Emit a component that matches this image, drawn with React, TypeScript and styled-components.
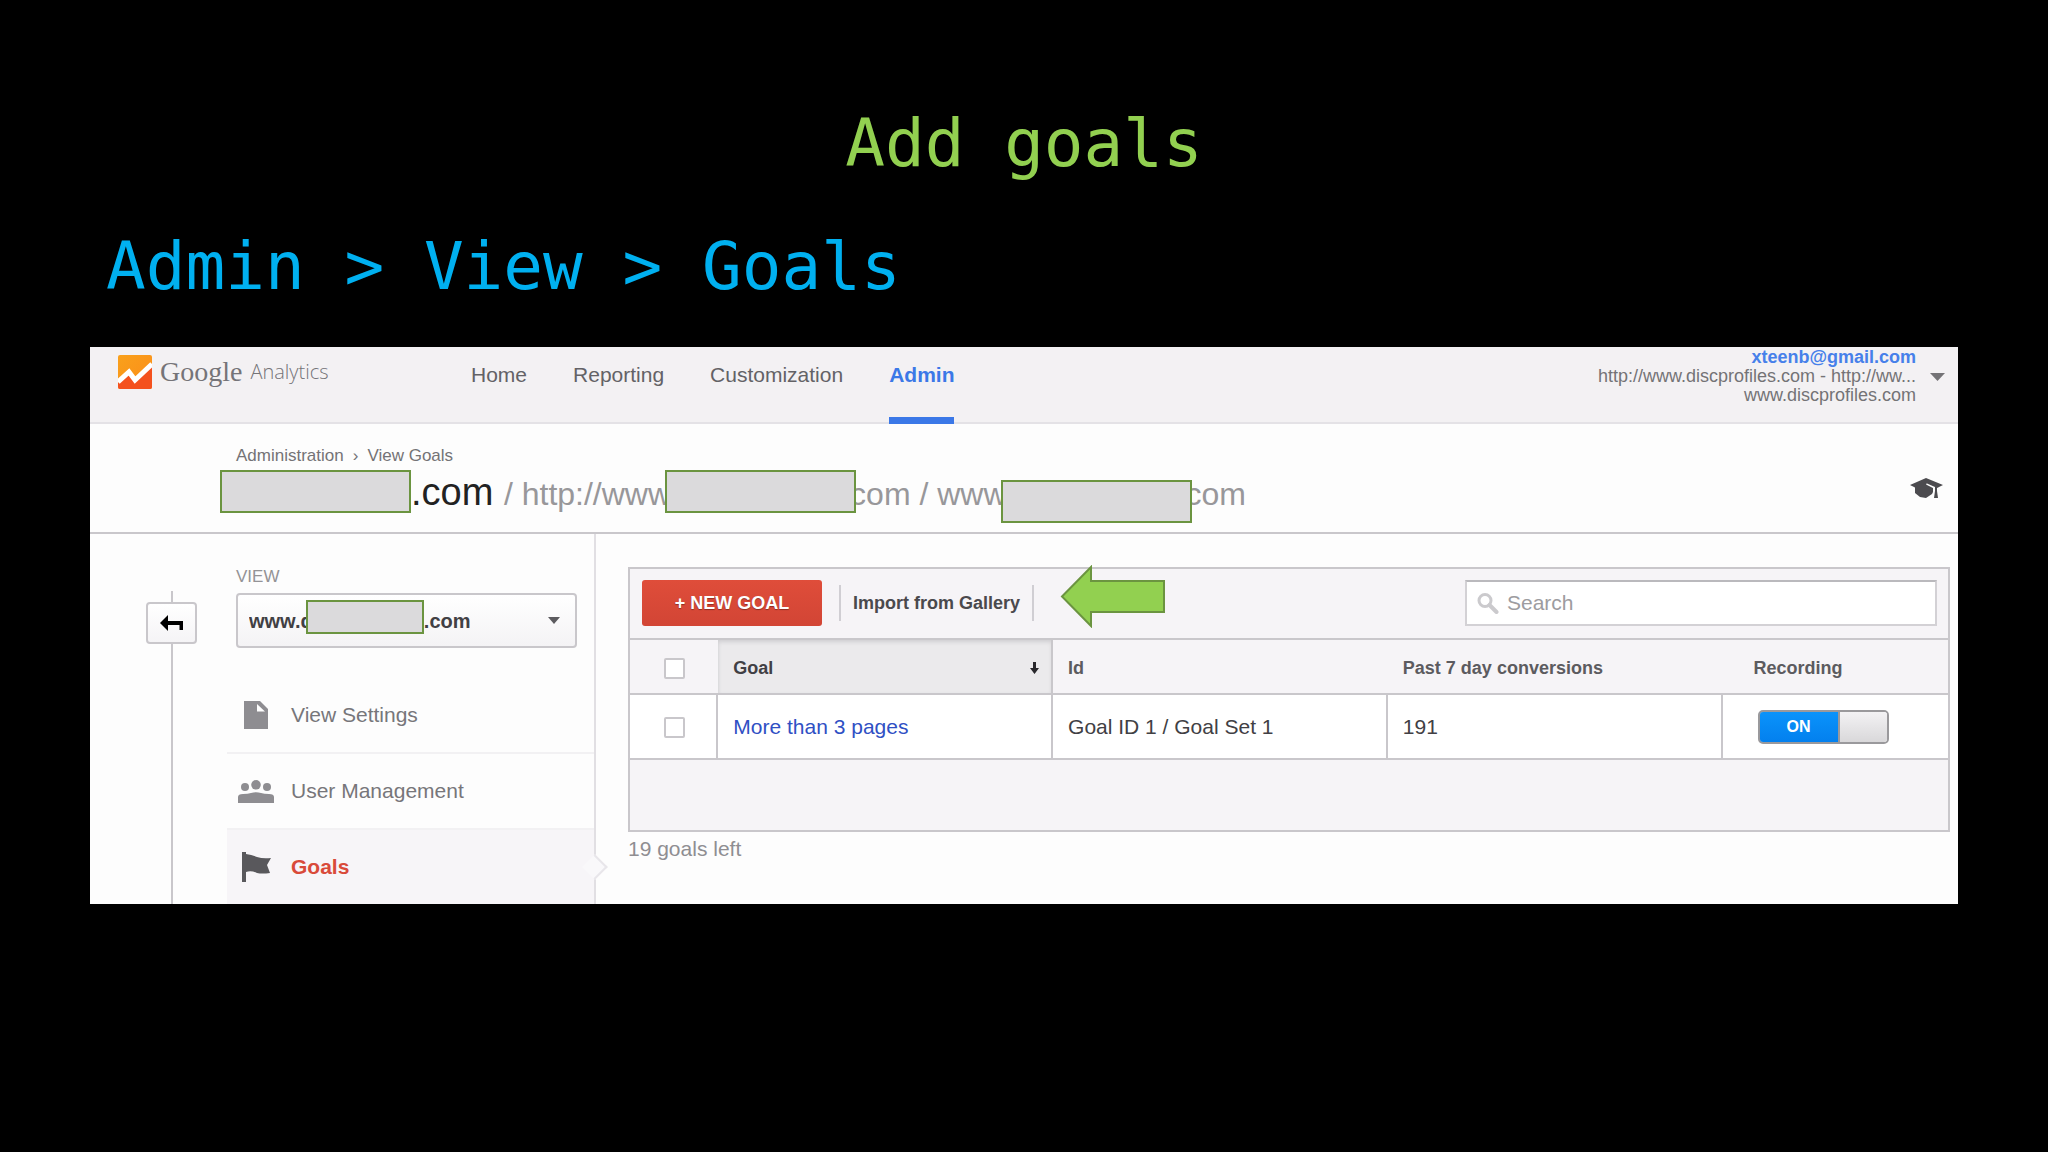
import React from "react";
import styled, { createGlobalStyle, css } from "styled-components";

const line = "#c9c7cb";
const green = "#6b9440";

const GlobalStyle = createGlobalStyle`
  *, *::before, *::after { box-sizing: border-box; }
  html, body { margin: 0; min-height: 100%; background: #000; }
  body { font-family: "Liberation Sans", Arial, sans-serif; font-size: 21px; line-height: 24px; color: #333; }
  button, input, select { font-family: inherit; }
`;

const Slide = styled.main`
  padding: 104px 90px 0;
`;

const SlideTitle = styled.h1`
  margin: 0;
  text-align: center;
  font: 400 66px/80px "DejaVu Sans Mono", monospace;
  color: #92d050;
`;

const SlideSubtitle = styled.p`
  margin: 43px 16px 40px;
  font: 400 66px/80px "DejaVu Sans Mono", monospace;
  color: #00b0f0;
`;

const Panel = styled.section`
  background: #fdfdfd;
`;

const TopBar = styled.header`
  display: flex;
  align-items: flex-start;
  padding: 0 13px 0 28px;
  background: #f3f1f3;
  box-shadow: inset 0 -2px 0 #e4e2e6;
`;

const Logo = styled.a`
  display: flex;
  align-items: center;
  gap: 8px;
  width: 353px;
  padding-top: 8px;
  text-decoration: none;
`;

const LogoGoogle = styled.span`
  font: 400 28px/34px "Liberation Serif", serif;
  color: #757478;
`;

const LogoProduct = styled.span`
  font: 300 20px/34px "Open Sans", sans-serif;
  color: #757478;
`;

const Nav = styled.nav`
  display: flex;
  gap: 46px;
`;

const NavLink = styled.a<{ $active?: boolean }>`
  padding: 16px 0 30px;
  border-bottom: 7px solid transparent;
  color: #636266;
  text-decoration: none;
  ${(p) =>
    p.$active &&
    css`
      color: #3b78e7;
      font-weight: 700;
      border-color: #3b78e7;
    `}
`;

const Account = styled.button`
  display: flex;
  align-items: center;
  gap: 14px;
  margin-left: auto;
  padding: 1px 0 0;
  border: 0;
  background: none;
  text-align: right;
  font-size: 18px;
  line-height: 19px;
  color: #747376;
`;

const AccountText = styled.span`
  display: flex;
  flex-direction: column;
`;

const Email = styled.strong`
  color: #4680ea;
`;

const TitleBar = styled.div`
  display: flex;
  justify-content: space-between;
  padding: 22px 15px 9px 146px;
  border-bottom: 2px solid ${line};
`;

const Crumbs = styled.nav`
  display: flex;
  gap: 9px;
  font-size: 17px;
  line-height: 20px;
  color: #747376;
`;

const CrumbLink = styled.a`
  color: inherit;
  text-decoration: none;
`;

const PageTitle = styled.h2`
  margin: 0;
  font-size: 38px;
  font-weight: 400;
  line-height: 52px;
  white-space: nowrap;
  color: #222;
`;

const Muted = styled.span`
  font-size: 32px;
  color: #98979a;
`;

const Redaction = styled.span<{ $lead?: boolean; $drop?: boolean }>`
  position: relative;
  display: inline-block;
  width: 191px;
  height: 43px;
  margin: ${(p) => (p.$lead ? "0 0 0 -16px" : "0 -6px")};
  vertical-align: ${(p) => (p.$drop ? "-18px" : "-8px")};
  border: 2px solid ${green};
  background: #dbdadc;
`;

const HelpButton = styled.button`
  align-self: flex-start;
  margin-top: 32px;
  padding: 0;
  border: 0;
  background: none;
  line-height: 0;
`;

const Body = styled.div`
  display: grid;
  grid-template-columns: 137px 369px minmax(0, 1fr);
`;

const Rail = styled.div`
  display: flex;
  flex-direction: column;
  align-items: center;
  padding: 57px 30px 0 56px;
`;

const RailLine = styled.span<{ $grow?: boolean }>`
  width: 2px;
  flex: ${(p) => (p.$grow ? "1" : "0 0 11px")};
  background: ${line};
`;

const BackButton = styled.button`
  display: grid;
  place-items: center;
  width: 51px;
  height: 42px;
  padding: 0;
  border: 2px solid ${line};
  border-radius: 4px;
  background: linear-gradient(#fff, #f5f4f6);
`;

const Sidebar = styled.aside`
  padding-top: 33px;
  border-right: 2px solid #e1dfe3;
`;

const ViewPicker = styled.div`
  position: relative;
  display: flex;
  flex-direction: column;
  gap: 6px;
  margin: 0 17px 30px 9px;
`;

const ViewLabel = styled.label`
  font-size: 17px;
  line-height: 20px;
  color: #949396;
`;

const ViewSelect = styled.select`
  appearance: none;
  height: 55px;
  padding: 0 11px;
  border: 2px solid ${line};
  border-radius: 4px;
  background: linear-gradient(#fff, #f4f3f5);
  font-size: 20px;
  font-weight: 700;
  color: #414044;
`;

const ViewCaret = styled.span`
  position: absolute;
  right: 17px;
  bottom: 24px;
  line-height: 0;
  pointer-events: none;
`;

const ViewRedaction = styled.span`
  position: absolute;
  left: 70px;
  bottom: 14px;
  width: 118px;
  height: 34px;
  border: 2px solid ${green};
  background: #dbdadc;
`;

const Menu = styled.ul`
  margin: 0;
  padding: 0;
  list-style: none;
`;

const MenuItem = styled.li<{ $active?: boolean }>`
  position: relative;
  &:not(:first-child) {
    border-top: 2px solid #f2f1f3;
  }
  ${(p) =>
    p.$active &&
    css`
      background: #f7f5f8;
      &::after {
        content: "";
        position: absolute;
        top: calc(50% - 9px);
        right: -10px;
        width: 18px;
        height: 18px;
        border: solid #e8e6ea;
        border-width: 2px 2px 0 0;
        background: #f9f8fa;
        transform: rotate(45deg);
      }
    `}
`;

const MenuLink = styled.a<{ $active?: boolean }>`
  display: flex;
  align-items: center;
  gap: 17px;
  height: 74px;
  padding-left: 11px;
  text-decoration: none;
  font-weight: ${(p) => (p.$active ? 700 : 400)};
  color: ${(p) => (p.$active ? "#d94a3a" : "#77767a")};
`;

const MenuIcon = styled.span`
  display: grid;
  place-items: center;
  width: 36px;
`;

const Main = styled.div`
  padding: 33px 8px 0 32px;
`;

const Card = styled.div`
  border: 2px solid ${line};
  background: #f6f4f7;
`;

const Toolbar = styled.div`
  display: flex;
  align-items: center;
  gap: 17px;
  padding: 11px 11px 12px 12px;
`;

const NewGoalButton = styled.button`
  width: 180px;
  height: 46px;
  padding: 0;
  border: 0;
  border-radius: 3px;
  background: linear-gradient(#df4d3a, #d24535);
  font-size: 18px;
  font-weight: 700;
  color: #fff;
  text-shadow: 0 1px 1px rgba(0, 0, 0, 0.35);
`;

const ImportGroup = styled.div`
  position: relative;
  display: flex;
  padding: 0 12px;
  border: solid #d0ced3;
  border-width: 0 2px;
`;

const ImportButton = styled.button`
  height: 36px;
  padding: 0;
  border: 0;
  background: none;
  font-size: 18px;
  font-weight: 700;
  color: #4a494d;
`;

const Pointer = styled.svg`
  position: absolute;
  left: calc(100% + 28px);
  top: -20px;
`;

const SearchBox = styled.label`
  display: flex;
  align-items: center;
  gap: 8px;
  flex: 0 1 472px;
  height: 46px;
  margin-left: auto;
  padding: 0 10px;
  border: 2px solid #d3d1d5;
  border-top-color: #bab9bd;
  background: #fff;
`;

const SearchInput = styled.input`
  flex: 1;
  min-width: 0;
  padding: 0;
  border: 0;
  outline: 0;
  background: none;
  font-size: 21px;
  &::placeholder {
    color: #9d9c9f;
    opacity: 1;
  }
`;

const Table = styled.table`
  width: 100%;
  table-layout: fixed;
  border-collapse: separate;
  border-spacing: 0;
  border-top: 2px solid ${line};
`;

const Col = styled.col<{ $w: number }>`
  width: ${(p) => p.$w}%;
`;

const Th = styled.th<{ $sorted?: boolean; $indent?: number }>`
  height: 55px;
  padding: 2px 12px 0 ${(p) => p.$indent ?? 15}px;
  border-bottom: 2px solid ${line};
  text-align: left;
  font-size: 18px;
  color: #5c5b5f;
  ${(p) =>
    p.$sorted &&
    css`
      border-right: 2px solid ${line};
      background: #ebeaec;
      box-shadow: inset 0 3px 4px -1px #cfced1, inset 2px 0 3px -1px #dcdbde;
      color: #414044;
    `}
`;

const SortRow = styled.span`
  display: flex;
  align-items: center;
  justify-content: space-between;
`;

const Td = styled.td<{ $indent?: number }>`
  height: 65px;
  padding: 0 12px 0 ${(p) => p.$indent ?? 15}px;
  border-bottom: 2px solid ${line};
  background: #fff;
  color: #414044;
  &:not(:last-child) {
    border-right: 2px solid ${line};
  }
`;

const Check = styled.input`
  appearance: none;
  display: block;
  width: 21px;
  height: 21px;
  margin: 1px 0 0 19px;
  border: 2px solid ${line};
  border-radius: 2px;
  background: #fff;
`;

const GoalLink = styled.a`
  color: #2f50c4;
  text-decoration: none;
`;

const Toggle = styled.label`
  position: relative;
  display: flex;
  width: 131px;
  height: 34px;
  border: 2px solid #9a999c;
  border-radius: 5px;
  overflow: hidden;
  font-size: 16px;
  font-weight: 700;
  color: #fff;
`;

const ToggleInput = styled.input`
  position: absolute;
  inset: 0;
  width: 100%;
  height: 100%;
  margin: 0;
  opacity: 0;
`;

const ToggleOn = styled.span`
  display: grid;
  place-items: center;
  flex: 1;
  margin: -2px 0 -2px -2px;
  border: 2px solid #0c72cc;
  border-right: 0;
  border-radius: 5px 0 0 5px;
  background: linear-gradient(#0a93fb, #0380ee);
`;

const ToggleKnob = styled.span`
  width: 49px;
  border-left: 2px solid #9a999c;
  background: linear-gradient(#f3f2f4, #d9d8da);
`;

const CardFoot = styled.div`
  height: 70px;
`;

const Remaining = styled.p`
  margin: 5px 0 0;
  color: #8f8e92;
`;

const Caret = ({ w, h, color }: { w: number; h: number; color: string }) => (
  <svg width={w} height={h} viewBox="0 0 10 6" preserveAspectRatio="none" aria-hidden="true">
    <path d="M0 0h10L5 6z" fill={color} />
  </svg>
);

const LogoMark = () => (
  <svg width="34" height="34" viewBox="0 0 34 34" aria-hidden="true">
    <defs>
      <linearGradient id="amber" x1="0" y1="0" x2="1" y2="1">
        <stop offset="0" stopColor="#f9a11b" />
        <stop offset="1" stopColor="#fb8c1a" />
      </linearGradient>
    </defs>
    <rect width="34" height="34" rx="2" fill="url(#amber)" />
    <path d="M0 28 11 18 17 26 34 10V32a2 2 0 0 1-2 2H2a2 2 0 0 1-2-2z" fill="#f4511e" />
    <path d="M0 27 11 17 17 25 34 9" fill="none" stroke="#fff" strokeWidth="5" />
  </svg>
);

const CapIcon = () => (
  <svg width="33" height="21" viewBox="0 0 33 21" aria-hidden="true">
    <path d="M0 7 16 0 33 7 27 10V13L28 20H24L25 13V9L17 5.500Q15 6 17 7L23 10V14L22 16 16 20 10 19 5 15V9.500z" fill="#4c4b4f" />
  </svg>
);

const BackIcon = () => (
  <svg width="23" height="17" viewBox="0 0 23 17" aria-hidden="true">
    <path d="M0 8 8 0V6H23V15H19.500V10H8V16z" fill="#000" />
  </svg>
);

const FileIcon = () => (
  <svg width="24" height="28" viewBox="0 0 24 28" aria-hidden="true">
    <path d="M0 0H16L24 8V28H0z" fill="#8e8d91" />
    <path d="M13 3V10.500H21z" fill="#fff" />
  </svg>
);

const PeopleIcon = () => (
  <svg width="36" height="23" viewBox="0 0 36 23" aria-hidden="true">
    <g fill="#8e8d91">
      <circle cx="7" cy="7" r="4" />
      <circle cx="18" cy="4.800" r="4.800" />
      <circle cx="29" cy="7" r="4" />
      <path d="M0 23V17Q0 14 5 14 10 14 13 13 18 11.500 23 13 26 14 31 14 36 14 36 17V23z" />
    </g>
  </svg>
);

const FlagIcon = () => (
  <svg width="29" height="30" viewBox="0 0 29 30" aria-hidden="true">
    <path d="M0 0H4V2Q10 3 15 5 21 7 29 6L25 13 28 21Q20 22 15 21 9 18 4 20V30H0z" fill="#59585c" />
  </svg>
);

const SearchIcon = () => (
  <svg width="22" height="21" viewBox="0 0 22 21" aria-hidden="true">
    <circle cx="8" cy="7.500" r="6" fill="none" stroke="#cbcacd" strokeWidth="3" />
    <path d="M12.500 12 19.500 19" stroke="#cbcacd" strokeWidth="4" strokeLinecap="round" />
  </svg>
);

const SortIcon = () => (
  <svg width="9" height="12" viewBox="0 0 9 12" aria-hidden="true">
    <path d="M3 0H6V6H9L4.500 12 0 6H3z" fill="#29282c" />
  </svg>
);

const navItems = ["Home", "Reporting", "Customization", "Admin"];

const menuItems = [
  { label: "View Settings", icon: <FileIcon /> },
  { label: "User Management", icon: <PeopleIcon /> },
  { label: "Goals", icon: <FlagIcon />, active: true },
];

const goals = [{ name: "More than 3 pages", id: "Goal ID 1 / Goal Set 1", conversions: 191 }];

export default function App() {
  return (
    <>
      <GlobalStyle />
      <Slide>
        <SlideTitle>Add goals</SlideTitle>
        <SlideSubtitle>Admin &gt; View &gt; Goals</SlideSubtitle>
        <Panel>
          <TopBar>
            <Logo href="#home">
              <LogoMark />
              <LogoGoogle>Google</LogoGoogle>
              <LogoProduct>Analytics</LogoProduct>
            </Logo>
            <Nav>
              {navItems.map((item) => (
                <NavLink key={item} href={`#${item.toLowerCase()}`} $active={item === "Admin"}>
                  {item}
                </NavLink>
              ))}
            </Nav>
            <Account type="button">
              <AccountText>
                <Email>xteenb@gmail.com</Email>
                <span>http://www.discprofiles.com - http://ww...</span>
                <span>www.discprofiles.com</span>
              </AccountText>
              <Caret w={15} h={8} color="#747376" />
            </Account>
          </TopBar>
          <TitleBar>
            <div>
              <Crumbs>
                <CrumbLink href="#administration">Administration</CrumbLink>
                <span>›</span>
                <CrumbLink href="#goals">View Goals</CrumbLink>
              </Crumbs>
              <PageTitle>
                <Redaction $lead />
                .com{" "}
                <Muted>
                  / http://www
                  <Redaction />
                  com / www
                  <Redaction $drop />
                  com
                </Muted>
              </PageTitle>
            </div>
            <HelpButton type="button" aria-label="Learn">
              <CapIcon />
            </HelpButton>
          </TitleBar>
          <Body>
            <Rail>
              <RailLine />
              <BackButton type="button" aria-label="Back">
                <BackIcon />
              </BackButton>
              <RailLine $grow />
            </Rail>
            <Sidebar>
              <ViewPicker>
                <ViewLabel htmlFor="view">VIEW</ViewLabel>
                <ViewSelect id="view">
                  <option>{`www.d${"\u00a0".repeat(20)}.com`}</option>
                </ViewSelect>
                <ViewRedaction />
                <ViewCaret>
                  <Caret w={12} h={7} color="#5c5b5f" />
                </ViewCaret>
              </ViewPicker>
              <Menu>
                {menuItems.map((item) => (
                  <MenuItem key={item.label} $active={item.active}>
                    <MenuLink href="#menu" $active={item.active}>
                      <MenuIcon>{item.icon}</MenuIcon>
                      {item.label}
                    </MenuLink>
                  </MenuItem>
                ))}
              </Menu>
            </Sidebar>
            <Main>
              <Card>
                <Toolbar>
                  <NewGoalButton type="button">+ NEW GOAL</NewGoalButton>
                  <ImportGroup>
                    <ImportButton type="button">Import from Gallery</ImportButton>
                    <Pointer width="106" height="63" viewBox="0 0 106 63" aria-hidden="true">
                      <path d="M2 31.500 31 2V16H104V47H31V61z" fill="#92d050" stroke={green} strokeWidth="2" />
                    </Pointer>
                  </ImportGroup>
                  <SearchBox>
                    <SearchIcon />
                    <SearchInput type="search" placeholder="Search" aria-label="Search" />
                  </SearchBox>
                </Toolbar>
                <Table>
                  <colgroup>
                    <Col $w={6.7} />
                    <Col $w={25.4} />
                    <Col $w={25.4} />
                    <Col $w={25.4} />
                    <Col $w={17.1} />
                  </colgroup>
                  <thead>
                    <tr>
                      <Th>
                        <Check type="checkbox" aria-label="Select all goals" />
                      </Th>
                      <Th $sorted>
                        <SortRow>
                          Goal
                          <SortIcon />
                        </SortRow>
                      </Th>
                      <Th>Id</Th>
                      <Th>Past 7 day conversions</Th>
                      <Th $indent={31}>Recording</Th>
                    </tr>
                  </thead>
                  <tbody>
                    {goals.map((goal) => (
                      <tr key={goal.id}>
                        <Td>
                          <Check type="checkbox" aria-label={`Select ${goal.name}`} />
                        </Td>
                        <Td>
                          <GoalLink href="#goal">{goal.name}</GoalLink>
                        </Td>
                        <Td>{goal.id}</Td>
                        <Td>{goal.conversions}</Td>
                        <Td $indent={35}>
                          <Toggle>
                            <ToggleInput type="checkbox" defaultChecked />
                            <ToggleOn>ON</ToggleOn>
                            <ToggleKnob />
                          </Toggle>
                        </Td>
                      </tr>
                    ))}
                  </tbody>
                </Table>
                <CardFoot />
              </Card>
              <Remaining>19 goals left</Remaining>
            </Main>
          </Body>
        </Panel>
      </Slide>
    </>
  );
}
